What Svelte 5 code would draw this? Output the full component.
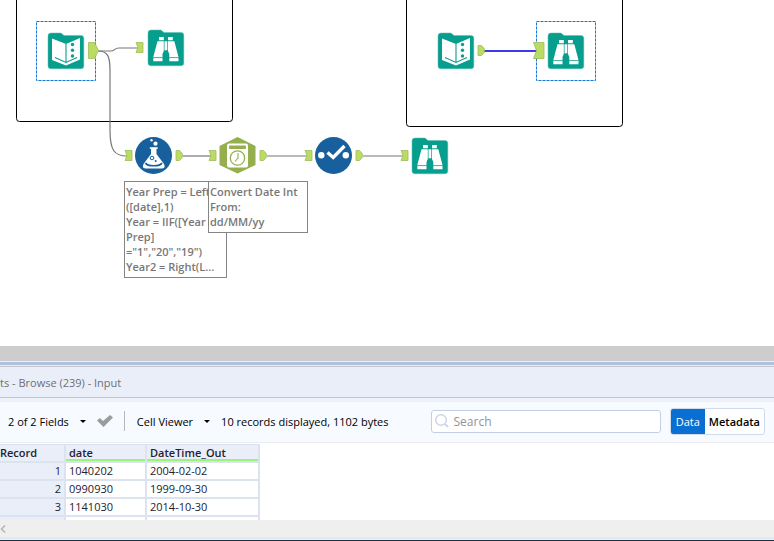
<script lang="ts">
	type Point = { x: number; y: number };

	const inputs: Point[] = [
		{ x: 48, y: 33 },
		{ x: 438, y: 33 }
	];

	const browses: Point[] = [
		{ x: 148, y: 30 },
		{ x: 548, y: 33 },
		{ x: 412, y: 138 }
	];

	const anchorsIn: Point[] = [
		{ x: 136, y: 42 },
		{ x: 125, y: 150 },
		{ x: 209, y: 150 },
		{ x: 305, y: 150 },
		{ x: 401, y: 150 }
	];

	const anchorsOut: Point[] = [
		{ x: 478, y: 45 },
		{ x: 176, y: 150 },
		{ x: 260, y: 150 },
		{ x: 356, y: 150 }
	];

	const wires = [
		'M98 51 H111 C115 51 114 48 119 48 H138',
		'M98 51 C108 51 110 57 110 70 V130 C110 150 114 156 127 156',
		'M183 156 H211',
		'M267 156 H307',
		'M363 156 H403'
	];

	const formulaNote = ['Year Prep = Left', '([date],1)', 'Year = IIF([Year', 'Prep]', '="1","20","19")', 'Year2 = Right(L...'];
	const dateNote = ['Convert Date Int', 'From:', 'dd/MM/yy'];

	const rows = [
		{ record: '1', date: '1040202', out: '2004-02-02' },
		{ record: '2', date: '0990930', out: '1999-09-30' },
		{ record: '3', date: '1141030', out: '2014-10-30' },
		{ record: '', date: '', out: '' }
	];

	let view = $state('Data');
	let search = $state('');
</script>

<div class="app">
	<main class="canvas">
		<svg class="flow" role="img" aria-label="Workflow">
			{#snippet folder()}
				<path
					d="M3 0 H13 L16 2.5 H33 Q35.8 2.5 35.8 5.5 V33 Q35.8 35.8 33 35.8 H3 Q0 35.8 0 33 V3 Q0 0 3 0 Z"
					fill="#079e8d"
					stroke="#58bfb3"
					stroke-width="0.5"
				/>
			{/snippet}

			<!-- containers -->
			<rect x="16.5" y="-8.5" width="216" height="130" rx="3" fill="#fff" stroke="#000" />
			<rect x="406.5" y="-8.5" width="216" height="135" rx="3" fill="#fff" stroke="#000" />

			<!-- connections -->
			{#each wires as d}
				<path {d} fill="none" stroke="#777" stroke-width="1.2" />
			{/each}
			<path d="M484 51 H537" stroke="#3b3be8" stroke-width="2" />

			<!-- selected tools -->
			<rect class="selection" x="36.5" y="21.5" width="59" height="59" />
			<rect class="selection" x="536.5" y="21.5" width="59" height="59" />

			{#each inputs as { x, y }}
				<g transform="translate({x} {y})">
					{@render folder()}
					<path d="M4 5.5 L18 11 L32 5 V26.5 L18 32.5 L4 27 Z" fill="#fff" />
					<path d="M18 11 V29.5 M7 24.5 L18 29.5 L29 24.5" fill="none" stroke="#079e8d" stroke-width="1.1" />
					<circle cx="24.5" cy="11.5" r="1.7" fill="#079e8d" />
					<circle cx="24.5" cy="17.3" r="1.7" fill="#079e8d" />
					<circle cx="24.5" cy="23" r="1.7" fill="#079e8d" />
				</g>
			{/each}

			{#each browses as { x, y }}
				<g transform="translate({x} {y})">
					{@render folder()}
					<path d="M11 7 H15.8 V10.3 H11 Z M20 7 H24.8 V10.3 H20 Z" fill="#fff" />
					<path d="M9.5 11.3 H15.8 V21 L14.5 24 V31.3 H5.3 V27 Z" fill="#fff" />
					<path d="M26.3 11.3 H20 V21 L21.3 24 V31.3 H30.5 V27 Z" fill="#fff" />
					<rect x="16.5" y="11.3" width="2.8" height="9" fill="#fff" />
					<path d="M5 27.6 H15 M21 27.6 H31" stroke="#079e8d" stroke-width="0.8" />
				</g>
			{/each}

			<!-- formula -->
			<circle cx="153.5" cy="155.5" r="18.5" fill="#185f9d" />
			<path
				d="M151 148 V154 L143.5 164 Q141.5 168.5 146 168.5 H161.5 Q166 168.5 164 164 L156.5 154 V148"
				fill="#fff"
			/>
			<path d="M149.8 148 H157.7" stroke="#fff" stroke-width="1.6" />
			<path d="M145.5 163 Q147 165.8 153.7 165.8 T162 163" fill="none" stroke="#185f9d" stroke-width="1.6" />
			<circle cx="152" cy="158" r="1.8" fill="#fff" stroke="#185f9d" />
			<circle cx="155.7" cy="161" r="1" fill="#185f9d" />
			<circle cx="151.5" cy="140.3" r="1.2" fill="#fff" />
			<circle cx="155.5" cy="143.7" r="2.1" fill="#fff" />

			<!-- date time -->
			<path d="M237.5 137 L255.5 146 V165 L237.5 173.5 L219.5 165 V146 Z" fill="#95ae4e" />
			<rect x="227" y="143.5" width="21" height="24" rx="2" fill="#fff" />
			<rect x="229" y="145.5" width="17" height="3.5" rx="1" fill="#95ae4e" />
			<circle cx="237.5" cy="158" r="7.2" fill="#fff" stroke="#95ae4e" stroke-width="1.3" />
			<path d="M238 153 V158 L235 161.5" fill="none" stroke="#95ae4e" stroke-width="1.1" />

			<!-- select -->
			<circle cx="333.5" cy="155.5" r="18.5" fill="#185f9d" />
			<circle cx="321.3" cy="155.2" r="3.2" fill="#fff" />
			<circle cx="345.8" cy="155.2" r="3.2" fill="#fff" />
			<path d="M327.5 152.5 L333.2 157.5 L344.5 146" fill="none" stroke="#fff" stroke-width="3.4" />

			{#each anchorsIn as { x, y }}
				<path class="anchor" transform="translate({x} {y})" d="M0 0.5 H7 V10.5 H0 L2 5.5 Z" />
			{/each}
			{#each anchorsOut as { x, y }}
				<path class="anchor" transform="translate({x} {y})" d="M0 0.5 H3.5 L6.3 3.5 V7.5 L3.5 10.5 H0 Z" />
			{/each}
			<path class="anchor" d="M88.5 42.5 H94.5 L98.5 50.5 L94.5 58.5 H88.5 Z" />
			<path class="anchor" d="M533.5 42.5 H544 V58.5 H533.5 L536.5 50.5 Z" />
		</svg>

		<div class="note formula">
			{#each formulaNote as line}
				<div>{line}</div>
			{/each}
		</div>
		<div class="note datetime">
			{#each dateNote as line}
				<div>{line}</div>
			{/each}
		</div>
	</main>

	<div class="splitter"></div>

	<section class="results">
		<header class="results-title">ts - Browse (239) - Input</header>

		<div class="toolbar">
			<button class="menu">2 of 2 Fields <span class="caret"></span></button>
			<button class="apply" aria-label="Apply">
				<svg width="18" height="14" viewBox="0 0 18 14">
					<path d="M1 6.5 L4 4 L7 7 L14 1 L17 3.5 L7.5 13 Z" fill="#9b9b9b" />
				</svg>
			</button>
			<span class="divider"></span>
			<button class="menu">Cell Viewer <span class="caret"></span></button>
			<span class="status">10 records displayed, 1102 bytes</span>
			<label class="search">
				<svg width="16" height="16" viewBox="0 0 16 16">
					<circle cx="7" cy="7" r="5.3" fill="none" stroke="#ccd7ea" stroke-width="1.5" />
					<path d="M11 11 L14 14" stroke="#ccd7ea" stroke-width="2" />
				</svg>
				<input type="text" placeholder="Search" aria-label="Search" bind:value={search} />
			</label>
			<div class="switch">
				<button class:active={view === 'Data'} onclick={() => (view = 'Data')}>Data</button>
				<button class:active={view === 'Metadata'} onclick={() => (view = 'Metadata')}>Metadata</button>
			</div>
		</div>

		<div class="grid">
			<table>
				<thead>
					<tr>
						<th class="record">Record</th>
						<th class="date">date</th>
						<th class="out">DateTime_Out</th>
					</tr>
				</thead>
				<tbody>
					{#each rows as row}
						<tr>
							<td class="record">{row.record}</td>
							<td>{row.date}</td>
							<td>{row.out}</td>
						</tr>
					{/each}
				</tbody>
			</table>
		</div>

		<div class="scrollbar">
			<svg width="6" height="8" viewBox="0 0 6 8">
				<path d="M5 0.5 L1.5 4 L5 7.5" fill="none" stroke="#b4b4b4" stroke-width="1.5" />
			</svg>
		</div>
		<div class="edge"></div>
	</section>
</div>

<style>
	:global(body) {
		margin: 0;
		background: #fff;
	}

	.app {
		display: flex;
		flex-direction: column;
		min-height: 100vh;
		font-family: 'Open Sans', 'Noto Sans', sans-serif;
		font-size: 11px;
		color: #000;
	}

	.canvas {
		position: relative;
		flex: 1;
		min-height: 300px;
		overflow: hidden;
	}

	.flow {
		position: absolute;
		inset: 0;
		width: 100%;
		height: 100%;
	}

	.selection {
		fill: none;
		stroke: #0f78d4;
		stroke-dasharray: 3 1;
	}

	.anchor {
		fill: #bbdc62;
		stroke: #9fbb5c;
		stroke-width: 0.8;
	}

	.note {
		position: absolute;
		top: 181px;
		box-sizing: border-box;
		padding: 2px 1px 3px;
		border: 1px solid #858585;
		background: #fff;
		color: #777;
		font-weight: 600;
		line-height: 15px;
		white-space: nowrap;
	}

	.formula {
		left: 124px;
		width: 103px;
	}

	.datetime {
		left: 208px;
		width: 100px;
	}

	.splitter {
		height: 15px;
		background: #cdcdcd;
	}

	.results {
		display: flex;
		flex-direction: column;
		border-top: 1px solid #eaeef8;
	}

	.results-title {
		display: flex;
		align-items: center;
		height: 30px;
		padding-top: 2px;
		border-top: 3px solid #b0c0e1;
		border-bottom: 1px solid #c4c4c8;
		background: #eaeef9;
		box-shadow:
			inset 0 1px #eaeef8,
			inset 0 2px #c4c4c8;
		color: #6e6e74;
	}

	.toolbar {
		display: flex;
		align-items: center;
		height: 38px;
		padding: 0 9px 2px 8px;
		border-top: 4px solid #edf1f9;
		border-bottom: 1px solid #ececf0;
		background: #f7faff;
	}

	button {
		padding: 0;
		border: 0;
		background: none;
		color: inherit;
		font: inherit;
		white-space: nowrap;
	}

	.menu {
		display: flex;
		gap: 11px;
		align-items: center;
	}

	.caret {
		border: 3px solid transparent;
		border-top-color: #000;
		border-bottom: 0;
	}

	.apply {
		display: flex;
		margin-left: 10px;
	}

	.divider {
		width: 1px;
		height: 20px;
		margin: 0 12px 0 10px;
		background: #b8b8b8;
	}

	.status {
		margin-left: 11px;
		white-space: nowrap;
	}

	.search {
		display: flex;
		flex: 1;
		align-items: center;
		gap: 4px;
		box-sizing: border-box;
		height: 23px;
		margin: 0 9px 0 42px;
		padding: 0 2px;
		border: 1px solid #c5cfe4;
		border-radius: 3px;
		background: #fff;
	}

	.search input {
		flex: 1;
		min-width: 0;
		padding: 0;
		border: 0;
		outline: 0;
		background: none;
		font: inherit;
		font-size: 12px;
	}

	.search input::placeholder {
		color: #949494;
	}

	.switch {
		display: flex;
		box-sizing: border-box;
		height: 27px;
		border: 1px solid #cfdaec;
		border-radius: 3px;
		background: #fff;
		overflow: hidden;
		font-weight: 600;
	}

	.switch button {
		padding: 0 4px;
	}

	.switch .active {
		padding: 0 5px;
		background: #0a6fd2;
		color: #fff;
		font-weight: 400;
	}

	.grid {
		height: 76px;
		padding-top: 1px;
		overflow: hidden;
		background: #fff;
	}

	table {
		width: 260px;
		table-layout: fixed;
		border-spacing: 0;
		border-top: 1px solid #dbe3f0;
		color: #1e2233;
	}

	th,
	td {
		box-sizing: border-box;
		height: 18px;
		padding: 0 3px;
		border-right: 2px solid #dbe3f0;
		border-bottom: 2px solid #dbe3f0;
		line-height: 16px;
		text-align: left;
	}

	th {
		background: #eaeef9;
		box-shadow: inset 0 -2px #9cf37c;
		font-weight: 600;
	}

	th.record {
		width: 66px;
		padding-left: 0;
		box-shadow: none;
	}

	th.date {
		width: 81px;
	}

	td.record {
		background: #eaeef9;
		text-align: right;
	}

	.scrollbar {
		display: flex;
		align-items: center;
		height: 17px;
		background: #efefef;
	}

	.edge {
		height: 1px;
		border-top: 2px solid #e3e9f4;
		border-bottom: 1px solid #1c3142;
		background: #f0f0f0;
	}
</style>
